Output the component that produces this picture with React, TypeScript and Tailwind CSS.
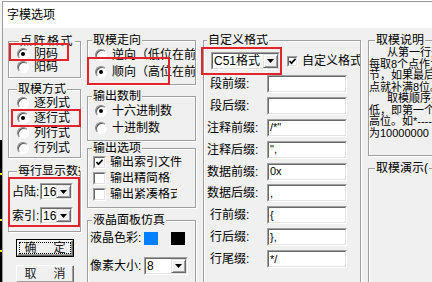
import React from "react";

type Kids = { className?: string; children?: React.ReactNode };

const Group = ({
  className = "",
  cap,
  capClass = "",
  children,
}: Kids & { cap: string; capClass?: string }) => (
  <div
    className={`flex flex-col border border-[#a0a0a0] shadow-[inset_1px_1px_0_#fff,1px_1px_0_#fff] ${className}`}
  >
    <span
      className={`-mt-[7px] block w-fit shrink-0 overflow-hidden whitespace-nowrap bg-[#f0f0f0] px-px text-[12px] leading-[12px] ${capClass}`}
    >
      {cap}
    </span>
    {children}
  </div>
);

const Radio = ({ checked = false }: { checked?: boolean }) => (
  <span className="flex h-3 w-3 shrink-0 items-center justify-center rounded-full border border-t-[#8a8a8a] border-l-[#8a8a8a] border-r-white border-b-white bg-white shadow-[inset_1px_1px_0_#5a5a5a]">
    {checked && <span className="h-1 w-1 rounded-full bg-black" />}
  </span>
);

const Check = ({ checked = false, className = "h-[13px] w-[13px]" }: { checked?: boolean; className?: string }) => (
  <span
    className={`flex shrink-0 border border-t-[#a0a0a0] border-l-[#a0a0a0] border-r-white border-b-white ${className}`}
  >
    <span className="flex flex-1 items-center justify-center border border-t-[#696969] border-l-[#696969] border-r-[#e3e3e3] border-b-[#e3e3e3] bg-white">
      {checked && (
        <svg width="7" height="7" viewBox="0 0 7 7">
          <path d="M0.5 3 L2.5 5.2 L6.6 0.8" stroke="#000" strokeWidth="1.7" fill="none" />
        </svg>
      )}
    </span>
  </span>
);

const Sunken = ({ className = "", children }: Kids) => (
  <div
    className={`flex shrink-0 border border-t-[#a0a0a0] border-l-[#a0a0a0] border-r-white border-b-white ${className}`}
  >
    <div className="flex min-w-0 flex-1 items-center overflow-hidden border border-t-[#696969] border-l-[#696969] border-r-[#e3e3e3] border-b-[#e3e3e3] bg-white">
      {children}
    </div>
  </div>
);

const Arrow = () => (
  <div className="ml-auto flex h-full w-[15px] shrink-0 items-center justify-center border border-t-[#e3e3e3] border-l-[#e3e3e3] border-r-[#696969] border-b-[#696969] bg-[#f0f0f0] shadow-[inset_1px_1px_0_#fff,inset_-1px_-1px_0_#a0a0a0]">
    <svg width="7" height="4" viewBox="0 0 7 4">
      <path d="M0 0h7L3.5 4z" fill="#000" />
    </svg>
  </div>
);

const Combo = ({ value, className = "" }: { value: string; className?: string }) => (
  <Sunken className={className}>
    <span className="pl-[1px] text-[12px] leading-none">{value}</span>
    <Arrow />
  </Sunken>
);

const RadioRow = ({ label, checked = false, className = "" }: { label: string; checked?: boolean; className?: string }) => (
  <div className={`flex items-center overflow-hidden whitespace-nowrap text-[12px] leading-none ${className}`}>
    <Radio checked={checked} />
    <span className="ml-[5px]">{label}</span>
  </div>
);

const CheckRow = ({ label, checked = false, w }: { label: string; checked?: boolean; w: string }) => (
  <div className="flex h-4 items-center pl-[5px] text-[12px] leading-none">
    <Check checked={checked} />
    <span className={`ml-[4px] overflow-hidden whitespace-nowrap ${w}`}>{label}</span>
  </div>
);

const Field = ({ label, value, pad }: { label: string; value: string; pad: string }) => (
  <div className="flex h-[18px] items-center">
    <span className={`w-[63px] shrink-0 text-[12px] leading-none ${pad}`}>{label}</span>
    <Sunken className="h-[18px] w-[80px]">
      <span className="pl-[1px] text-[11px] leading-none">{value}</span>
    </Sunken>
  </div>
);

const notes = [
  ["pl-[18px]", "从第一行开始向右"],
  ["", "每取8个点作为一个字"],
  ["", "节，如果最后不足8个"],
  ["", "点就补满8位。"],
  ["pl-[18px]", "取模顺序是从高到"],
  ["", "低，即第一个点作为最"],
  ["", "高位。如*-------取"],
  ["", "为10000000"],
];

export default function App() {
  return (
    <div className="relative flex h-[282px] w-[432px] overflow-hidden bg-white font-['Liberation_Sans','Noto_Sans_CJK_SC',sans-serif] text-black">
      <div className="flex w-[2px] shrink-0 flex-col">
        <div className="h-[140px] bg-[#f4f4f4]" />
        <div className="flex flex-1 flex-col bg-black">
          <span className="mt-[33px] h-[2px] bg-[#f2e200]" />
          <span className="mt-[44px] h-[2px] bg-[#f2e200]" />
          <span className="mt-[29px] h-[2px] bg-[#f2e200]" />
        </div>
      </div>

      <div className="mt-px flex min-w-0 flex-1 flex-col border-l border-t border-[#9a9a9a]">
        <div className="flex h-[26px] shrink-0 items-center bg-white pl-[4px] text-[12px] leading-none">
          字模选项
        </div>

        <div className="flex flex-1 bg-[#f0f0f0] pl-[5px] pt-[12px]">
          {/* left column */}
          <div className="flex w-[73px] shrink-0 flex-col">
            <Group className="mt-px h-[37px]" cap="点阵格式" capClass="ml-[10px] tracking-[1.5px]">
              <div className="flex flex-col pl-[8px]">
                <RadioRow className="h-[13px]" checked label="阴码" />
                <RadioRow className="h-[13px]" label="阳码" />
              </div>
            </Group>
            <Group className="mt-[11px] h-[69px]" cap="取模方式" capClass="ml-[8px]">
              <div className="flex flex-col pl-[8px]">
                <RadioRow className="h-[15px]" label="逐列式" />
                <RadioRow className="h-[15px]" checked label="逐行式" />
                <RadioRow className="h-[15px]" label="列行式" />
                <RadioRow className="h-[15px]" label="行列式" />
              </div>
            </Group>
            <Group className="mt-[13px] h-[61px]" cap="每行显示数据" capClass="ml-[8px] max-w-[63px]">
              <div className="mt-[6px] flex h-[17px] items-center pl-[3px] text-[12px] leading-none">
                <span className="w-[28px]">占陆:</span>
                <Combo className="h-[17px] w-[33px]" value="16" />
              </div>
              <div className="mt-[7px] flex h-[17px] items-center pl-[3px] text-[12px] leading-none">
                <span className="w-[28px]">索引:</span>
                <Combo className="h-[17px] w-[33px]" value="16" />
              </div>
            </Group>
            <div className="ml-[8px] mt-[7px] flex h-[18px] w-[58px] shrink-0 border border-black">
              <div className="flex flex-1 border border-t-white border-l-white border-r-[#696969] border-b-[#696969] bg-[#f0f0f0] p-px shadow-[inset_-1px_-1px_0_#a0a0a0]">
                <div className="flex flex-1 items-center justify-center gap-[17px] border border-dotted border-black text-[12px] leading-none text-[#1a1a1a]">
                  <span>确</span>
                  <span>定</span>
                </div>
              </div>
            </div>
            <div className="ml-[8px] mt-[8px] flex h-[18px] w-[58px] shrink-0 border border-t-white border-l-white border-r-[#696969] border-b-[#696969] bg-[#f0f0f0] shadow-[inset_-1px_-1px_0_#a0a0a0]">
              <div className="flex flex-1 items-center justify-center gap-[17px] text-[12px] leading-none text-[#1a1a1a]">
                <span>取</span>
                <span>消</span>
              </div>
            </div>
          </div>

          {/* second column */}
          <div className="ml-[6px] flex w-[109px] shrink-0 flex-col">
            <Group className="h-[45px]" cap="取模走向" capClass="ml-[4px]">
              <div className="flex flex-col pl-[7px]">
                <RadioRow className="h-[17px]" label="逆向（低位在前）" />
                <RadioRow className="h-[17px]" checked label="顺向（高位在前）" />
              </div>
            </Group>
            <Group className="mt-[11px] h-[45px]" cap="输出数制" capClass="ml-[4px]">
              <div className="flex flex-col pl-[7px]">
                <RadioRow className="h-[17px]" checked label="十六进制数" />
                <RadioRow className="h-[17px]" label="十进制数" />
              </div>
            </Group>
            <Group className="mt-[7px] h-[60px]" cap="输出选项" capClass="ml-[4px]">
              <CheckRow checked label="输出索引文件" w="max-w-[80px]" />
              <CheckRow label="输出精简格式" w="max-w-[61px]" />
              <CheckRow label="输出紧凑格式" w="max-w-[67px]" />
            </Group>
            <Group className="mt-[12px] flex-1" cap="液晶面板仿真" capClass="ml-[4px]">
              <div className="mt-[4px] flex h-4 items-center pl-[2px] text-[12px] leading-none">
                <span className="w-[54px]">液晶色彩:</span>
                <span className="h-[13px] w-[14px] bg-[#0080ff]" />
                <span className="ml-[13px] h-[13px] w-[14px] bg-black" />
              </div>
              <div className="mt-[11px] flex h-[18px] items-center pl-[2px] text-[12px] leading-none">
                <span className="w-[54px]">像素大小:</span>
                <Combo className="h-[18px] w-[44px]" value="8" />
              </div>
            </Group>
          </div>

          {/* custom format column */}
          <div className="ml-[7px] flex w-[158px] shrink-0 flex-col">
            <Group className="flex-1" cap="自定义格式" capClass="ml-[3px]">
              <div className="mt-[6px] flex h-[18px] items-center overflow-hidden whitespace-nowrap text-[12px] leading-none">
                <Combo className="ml-[7px] h-[18px] w-[69px]" value="C51格式" />
                <Check checked className="ml-[7px] h-[11px] w-[11px]" />
                <span className="ml-[4px]">自定义格式</span>
              </div>
              <div className="mt-[5px] flex flex-col gap-[3.9px]">
                <Field label="段前缀:" value="" pad="pl-[6px]" />
                <Field label="段后缀:" value="" pad="pl-[6px]" />
                <Field label="注释前缀:" value={'/*"'} pad="pl-[3px]" />
                <Field label="注释后缀:" value={'",'} pad="pl-[3px]" />
                <Field label="数据前缀:" value="0x" pad="pl-[3px]" />
                <Field label="数据后缀:" value="," pad="pl-[3px]" />
                <Field label="行前缀:" value="{" pad="pl-[6px]" />
                <Field label="行后缀:" value="}," pad="pl-[6px]" />
                <Field label="行尾缀:" value="*/" pad="pl-[6px]" />
              </div>
            </Group>
          </div>

          {/* notes column */}
          <div className="ml-[7px] flex w-[90px] shrink-0 flex-col">
            <Group className="h-[116px]" cap="取模说明" capClass="ml-[6px]">
              <div className="mt-px flex flex-col whitespace-nowrap text-[11px] leading-[11.5px]">
                {notes.map(([pad, line], i) => (
                  <span key={i} className={pad}>
                    {line}
                  </span>
                ))}
              </div>
            </Group>
            <Group className="mt-[12px] flex-1" cap="取模演示(" capClass="ml-[6px]" />
          </div>
        </div>
      </div>

      {/* red annotation boxes */}
      <div className="absolute left-[9px] top-[43px] h-[18px] w-[60px] border-2 border-[#e3242b]" />
      <div className="absolute left-[11px] top-[109px] h-[18px] w-[70px] border-2 border-[#e3242b]" />
      <div className="absolute left-[8px] top-[177px] h-[50px] w-[72px] border-2 border-[#e3242b]" />
      <div className="absolute left-[87px] top-[57px] h-[28px] w-[83px] border-2 border-[#e3242b]" />
      <div className="absolute left-[201px] top-[47px] h-[28px] w-[81px] border-2 border-[#e3242b]" />
    </div>
  );
}
